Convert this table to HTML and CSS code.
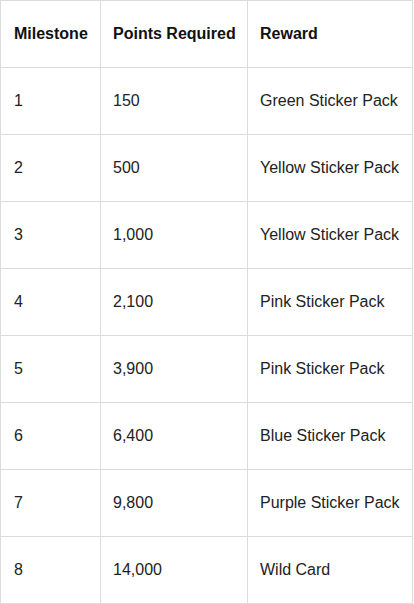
FILE: index.html
```html
<!DOCTYPE html>
<html>
<head>
<meta charset="utf-8">
<link rel="stylesheet" href="styles.css">
</head>
<body>
<table class="milestones">
  <colgroup>
    <col class="c1"><col class="c2"><col class="c3">
  </colgroup>
  <thead>
    <tr><th>Milestone</th><th>Points Required</th><th>Reward</th></tr>
  </thead>
  <tbody>
    <tr><td>1</td><td>150</td><td>Green Sticker Pack</td></tr>
    <tr><td>2</td><td>500</td><td>Yellow Sticker Pack</td></tr>
    <tr><td>3</td><td>1,000</td><td>Yellow Sticker Pack</td></tr>
    <tr><td>4</td><td>2,100</td><td>Pink Sticker Pack</td></tr>
    <tr><td>5</td><td>3,900</td><td>Pink Sticker Pack</td></tr>
    <tr><td>6</td><td>6,400</td><td>Blue Sticker Pack</td></tr>
    <tr><td>7</td><td>9,800</td><td>Purple Sticker Pack</td></tr>
    <tr><td>8</td><td>14,000</td><td>Wild Card</td></tr>
  </tbody>
</table>
</body>
</html>
```
FILE: styles.css
```css
html, body {
  margin: 0;
  padding: 0;
  background: #fff;
}
body {
  font-family: "Liberation Sans", Arial, sans-serif;
  font-size: 16px;
  color: #222;
}
.milestones {
  border-collapse: collapse;
  table-layout: fixed;
  width: 412px;
}
.c1 { width: 100px; }
.c2 { width: 147px; }
.c3 { width: 165px; }
.milestones th,
.milestones td {
  border: 1px solid #dcdcdc;
  padding: 24px 12px;
  line-height: 18px;
  text-align: left;
  white-space: nowrap;
}
.milestones th:first-child,
.milestones td:first-child {
  padding-left: 13px;
}
.milestones th {
  font-weight: bold;
  color: #111;
}
```
